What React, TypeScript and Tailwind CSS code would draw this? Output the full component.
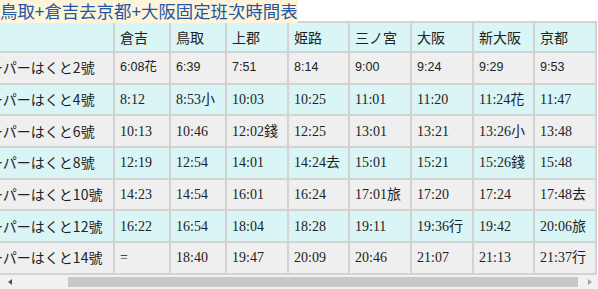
const stations = ["倉吉", "鳥取", "上郡", "姫路", "三ノ宮", "大阪", "新大阪", "京都"];
const widths = ["w-[54px]", "w-[54px]", "w-[60px]", "w-[59px]", "w-[60px]", "w-[60px]", "w-[59px]", "w-[60px]"];

const rows: { name: string; times: string[] }[] = [
  { name: "スーパーはくと2號", times: ["6:08花", "6:39", "7:51", "8:14", "9:00", "9:24", "9:29", "9:53"] },
  { name: "スーパーはくと4號", times: ["8:12", "8:53小", "10:03", "10:25", "11:01", "11:20", "11:24花", "11:47"] },
  { name: "スーパーはくと6號", times: ["10:13", "10:46", "12:02錢", "12:25", "13:01", "13:21", "13:26小", "13:48"] },
  { name: "スーパーはくと8號", times: ["12:19", "12:54", "14:01", "14:24去", "15:01", "15:21", "15:26錢", "15:48"] },
  { name: "スーパーはくと10號", times: ["14:23", "14:54", "16:01", "16:24", "17:01旅", "17:20", "17:24", "17:48去"] },
  { name: "スーパーはくと12號", times: ["16:22", "16:54", "18:04", "18:28", "19:11", "19:36行", "19:42", "20:06旅"] },
  { name: "スーパーはくと14號", times: ["=", "18:40", "19:47", "20:09", "20:46", "21:07", "21:13", "21:37行"] },
];

const cjk = "font-['Noto_Sans_CJK_TC','Noto_Sans_CJK_JP',sans-serif]";

export default function App() {
  return (
    <div className="w-[598px] h-[289px] overflow-hidden bg-white text-[#222]">
      <h1 className="h-[21px] leading-[21px]">
        <span className={`bg-[#fdf4da] text-[17.4px] font-normal text-[#2456a6] ${cjk}`}>
          鳥取+倉吉去京都+大阪固定班次時間表
        </span>
      </h1>

      <div className="w-full overflow-hidden">
        <table className="-ml-[28px] w-[625px] table-fixed border-separate border-spacing-[2px] bg-[#d3d3d3]">
          <thead>
            <tr className="h-[28px]">
              <th className="w-[139px] bg-[#daf5f5]" />
              {stations.map((s, i) => (
                <th
                  key={s}
                  className={`${widths[i]} bg-[#daf5f5] pl-[5px] text-left text-[14px] font-normal ${cjk}`}
                >
                  {s}
                </th>
              ))}
            </tr>
          </thead>
          <tbody>
            {rows.map((r, ri) => (
              <tr key={r.name} className="h-[29.7px]">
                <td
                  className={`pl-[1px] text-[14px] whitespace-nowrap ${cjk} ${
                    ri % 2 === 0 ? "bg-[#efefef]" : "bg-[#daf5f5]"
                  }`}
                >
                  {r.name}
                </td>
                {r.times.map((t, ti) => (
                  <td
                    key={ti}
                    className={`pl-[5px] whitespace-nowrap ${
                      ri === 0
                        ? "font-['Liberation_Sans','Noto_Sans_CJK_TC',sans-serif] text-[12.5px]"
                        : "font-['Liberation_Serif','Noto_Sans_CJK_TC',serif] text-[14px]"
                    } ${ri % 2 === 0 ? "bg-[#efefef]" : "bg-[#daf5f5]"}`}
                  >
                    {t}
                  </td>
                ))}
              </tr>
            ))}
          </tbody>
        </table>
      </div>

      {/* horizontal scrollbar */}
      <div className="flex h-[14px] items-center bg-[#f1f1f1]">
        <div className="flex w-[20px] justify-center">
          <div className="h-0 w-0 border-y-[3px] border-r-[4px] border-y-transparent border-r-[#505050]" />
        </div>
        <div className="flex flex-1 items-center">
          <div className="ml-[48px] h-[10px] w-[510px] bg-[#c8c8c8]" />
        </div>
        <div className="flex w-[16px] justify-center">
          <div className="h-0 w-0 border-y-[3px] border-l-[4px] border-y-transparent border-l-[#a3a3a3]" />
        </div>
      </div>
    </div>
  );
}
